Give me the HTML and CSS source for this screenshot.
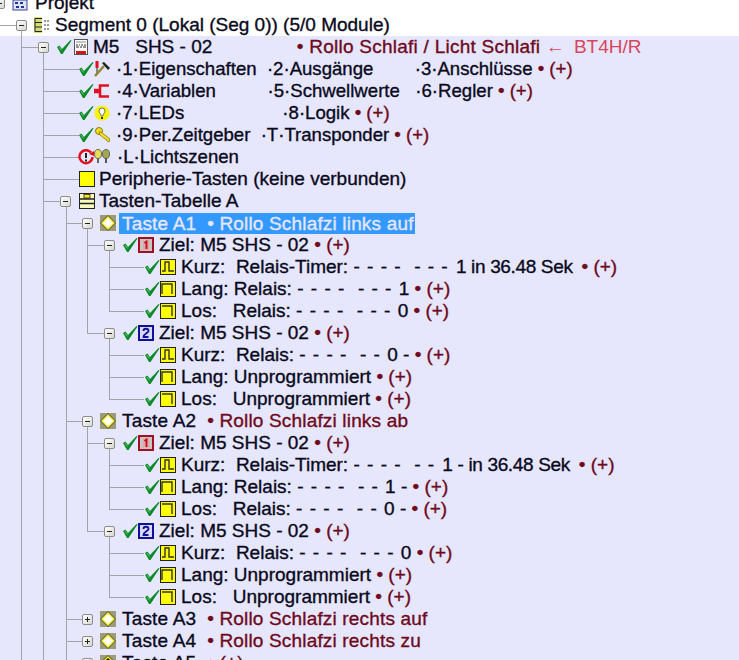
FILE: index.html
```html
<!DOCTYPE html>
<html lang="de">
<head>
    <meta charset="UTF-8">
    <title>Projekt</title>
    <link rel="stylesheet" href="styles.css">
</head>
<body>

<svg class="defs" width="0" height="0">
    <symbol id="i-check" viewBox="0 0 16 16"><path d="M1 8l2.500-1.500 2.500 3.500L14.500 1l1 .5L6.500 15H5z" fill="#0a8a2a"/><path d="M3 8l2.500 3.500" stroke="#6c6" fill="none"/></symbol>
    <symbol id="i-proj" viewBox="0 0 16 16"><rect x="1" y="5" width="14" height="10" fill="#dfe3f5" stroke="#334499"/><path d="M2 0h12v5H2z" fill="#b9a24a"/><path d="M3 8h3M8 8h3M4 12h3M9 12h3" stroke="#223399" stroke-width="2"/></symbol>
    <symbol id="i-seg" viewBox="0 0 16 16"><rect x="0" y="0" width="8" height="16" fill="#d4dc78"/><path d="M1 1.500h7M1 1.500v13h7M1 5.500h7M1 10h7" fill="none" stroke="#222"/><path d="M10 4h5M10 8h5M10 12h5" stroke="#333" stroke-dasharray="2 1"/></symbol>
    <symbol id="i-mod" viewBox="0 0 16 16"><rect x="1.500" y=".5" width="13" height="15" fill="#fff" stroke="#555"/><path d="M3 3h10" stroke="#888"/><path d="M3 6h2M6 6h1M8 6h2M11 6h2M3 8h3M7 8h2M10 8h3" stroke="#222"/><rect x="3" y="12" width="10" height="3" fill="#d01818"/></symbol>
    <symbol id="i-tool" viewBox="0 0 16 16"><path d="M3 0v7" stroke="#e01020" stroke-width="3"/><path d="M3 7v6" stroke="#222"/><path d="M1 15L10 5" stroke="#8c8a30" stroke-width="2.500"/><path d="M8 2l2-1 6 6-2 2z" fill="#222"/></symbol>
    <symbol id="i-var" viewBox="0 0 16 16"><path d="M15 2.500H6V7H0M0 9h6v4.500h9" fill="none" stroke="#e01020" stroke-width="2.500"/></symbol>
    <symbol id="i-led" viewBox="0 0 16 16"><circle cx="8" cy="8" r="7.500" fill="#f6f400"/><path d="M5 6a3 3 0 1 1 6 0c0 2-2 2-2 5H7c0-3-2-3-2-5z" fill="#fff" stroke="#555" stroke-width=".8"/><path d="M7 12h2v2H7z" fill="#333"/></symbol>
    <symbol id="i-key" viewBox="0 0 16 16"><circle cx="5" cy="4" r="3.500" fill="#f2e020" stroke="#8a7a10"/><path d="M5 5h2l9 7-1 3-2-1-1-2-1 0-5-4z" fill="#f2e020" stroke="#8a7a10" stroke-width=".8"/></symbol>
    <symbol id="i-scene" viewBox="0 0 32 16"><path d="M13 3.500A6.500 6.500 0 1 0 14.500 8" fill="none" stroke="#e01020" stroke-width="2.500"/><path d="M11 5l5-3v5z" fill="#e01020"/><path d="M8 4v5M8 10.500v2" stroke="#222" stroke-width="2"/><ellipse cx="20" cy="5" rx="3.500" ry="4.500" fill="#e8e050" stroke="#666"/><path d="M19 9h2v5h-2z" fill="#666"/><ellipse cx="28" cy="5" rx="3.500" ry="4.500" fill="#a0a850" stroke="#666"/><path d="M27 9h2v5h-2z" fill="#555"/></symbol>
    <symbol id="i-periph" viewBox="0 0 16 16"><rect x=".5" y=".5" width="15" height="15" fill="#ffff00" stroke="#222"/></symbol>
    <symbol id="i-table" viewBox="0 0 16 16"><rect x=".5" y=".5" width="15" height="15" fill="#f8f8c0" stroke="#222"/><path d="M1 6h14M1 10.500h14" stroke="#222" stroke-width="1.500"/><rect x="5" y="1.500" width="6" height="3.500" fill="#ffee00" stroke="#222" stroke-width=".8"/></symbol>
    <symbol id="i-taste" viewBox="0 0 16 16"><rect width="16" height="16" fill="#9c9c78"/><path d="M8 .5L15.500 8 8 15.500.5 8z" fill="#f8f020" stroke="#444"/><path d="M8 3L13 8 8 13 3 8z" fill="#fff"/></symbol>
    <symbol id="i-tasteoff" viewBox="0 0 16 16"><rect width="16" height="16" fill="#9c9c78"/><path d="M8 .5L15.500 8 8 15.500.5 8z" fill="#f8f020" stroke="#444"/><path d="M8 3L13 8 8 13 3 8z" fill="#111"/></symbol>
    <symbol id="i-z1" viewBox="0 0 16 16"><rect x="1" y="1" width="14" height="14" fill="#c8c4c4" stroke="#a01020" stroke-width="2"/><rect x="5" y="3.500" width="6" height="9" fill="#e8a0a0"/><path d="M6.500 6L8.500 4.500V12" fill="none" stroke="#c01020" stroke-width="1.800"/></symbol>
    <symbol id="i-z2" viewBox="0 0 16 16"><rect x="1" y="1" width="14" height="14" fill="#d8d8f0" stroke="#10109a" stroke-width="2"/><path d="M5.500 6c0-3 5-3 5 0 0 2-5 3-5 6h5" fill="none" stroke="#10109a" stroke-width="1.800"/></symbol>
    <symbol id="i-kurz" viewBox="0 0 16 16"><rect x=".5" y=".5" width="15" height="15" fill="#ffff00" stroke="#222"/><path d="M2 12h3V3h4v9h5" fill="none" stroke="#333" stroke-width="1.400"/></symbol>
    <symbol id="i-lang" viewBox="0 0 16 16"><rect x=".5" y=".5" width="15" height="15" fill="#ffff00" stroke="#222"/><path d="M2 13V3h10v10" fill="none" stroke="#333" stroke-width="1.400"/></symbol>
    <symbol id="i-los" viewBox="0 0 16 16"><rect x=".5" y=".5" width="15" height="15" fill="#ffff00" stroke="#222"/><path d="M2 3h10v10" fill="none" stroke="#333" stroke-width="1.400"/></symbol>
</svg>

<div class="tree">
    <svg class="guides" width="739" height="680">
        <path d="M21.500 30V680M0 25.500h16M43.500 52V680M22 47.500h16M66.500 206V680
                 M44 69.500h35M44 91.500h35M44 113.500h35M44 135.500h35M44 157.500h35M44 179.500h35M44 201.500h16
                 M66 223.500h16M66 421.500h16M66 619.500h16M66 641.500h16M66 663.500h16
                 M87.500 228V333.500M87 245.500h17M87 333.500h17M87.500 426V531.500M87 443.500h17M87 531.500h17
                 M109.500 250V311.500M109 267.500h35M109 289.500h35M109 311.500h35
                 M109.500 338V399.500M109 355.500h35M109 377.500h35M109 399.500h35
                 M109.500 448V509.500M109 465.500h35M109 487.500h35M109 509.500h35
                 M109.500 536V597.500M109 553.500h35M109 575.500h35M109 597.500h35" fill="none" stroke="#a4a4a8"/>
    </svg>

    <div class="row lv-proj"><span class="tgl minus"></span><svg class="ico"><use href="#i-proj"/></svg><span>Projekt</span></div>
    <div class="row lv-seg"><span class="tgl minus"></span><svg class="ico"><use href="#i-seg"/></svg><span>Segment 0 (Lokal (Seg 0)) (5/0 Module)</span></div>

    <div class="body">
        <div class="row lv-mod"><span class="tgl minus"></span><svg class="chk"><use href="#i-check"/></svg><svg class="ico"><use href="#i-mod"/></svg><span>M5   SHS - 02                <b class="mark">• Rollo Schlafi / Licht Schlafi</b> <b class="link"><i class="arrow">←</i> BT4H/R</b></span></div>
        <div class="row lv-item"><svg class="chk"><use href="#i-check"/></svg><svg class="ico"><use href="#i-tool"/></svg><span>·1·Eigenschaften  ·2·Ausgänge        ·3·Anschlüsse <b class="mark">• (+)</b></span></div>
        <div class="row lv-item"><svg class="chk"><use href="#i-check"/></svg><svg class="ico"><use href="#i-var"/></svg><span>·4·Variablen          ·5·Schwellwerte   ·6·Regler <b class="mark">• (+)</b></span></div>
        <div class="row lv-item"><svg class="chk"><use href="#i-check"/></svg><svg class="ico"><use href="#i-led"/></svg><span>·7·LEDs                   ·8·Logik <b class="mark">• (+)</b></span></div>
        <div class="row lv-item"><svg class="chk"><use href="#i-check"/></svg><svg class="ico"><use href="#i-key"/></svg><span>·9·Per.Zeitgeber  ·T·Transponder <b class="mark">• (+)</b></span></div>
        <div class="row lv-scene"><svg class="ico-wide"><use href="#i-scene"/></svg><span>·L·Lichtszenen</span></div>
        <div class="row lv-per"><svg class="ico"><use href="#i-periph"/></svg><span>Peripherie-Tasten (keine verbunden)</span></div>
        <div class="row lv-tab"><span class="tgl minus"></span><svg class="ico"><use href="#i-table"/></svg><span>Tasten-Tabelle A</span></div>

        <div class="row lv-taste"><span class="tgl minus"></span><svg class="ico"><use href="#i-taste"/></svg><span class="selected">Taste A1  • Rollo Schlafzi links auf</span></div>
        <div class="row lv-ziel"><span class="tgl minus"></span><svg class="chk"><use href="#i-check"/></svg><svg class="ico"><use href="#i-z1"/></svg><span>Ziel: M5 SHS - 02 <b class="mark">• (+)</b></span></div>
        <div class="row lv-key"><svg class="chk"><use href="#i-check"/></svg><svg class="ico"><use href="#i-kurz"/></svg><span>Kurz:  Relais-Timer: <span class="dashes">- - - -  - - - </span><span class="tight">1 in 36.48 Sek </span><b class="mark">• (+)</b></span></div>
        <div class="row lv-key"><svg class="chk"><use href="#i-check"/></svg><svg class="ico"><use href="#i-lang"/></svg><span>Lang: Relais: <span class="dashes">- - - -  - - - </span>1 <b class="mark">• (+)</b></span></div>
        <div class="row lv-key"><svg class="chk"><use href="#i-check"/></svg><svg class="ico"><use href="#i-los"/></svg><span>Los:   Relais: <span class="dashes">- - - -  - - - </span>0 <b class="mark">• (+)</b></span></div>
        <div class="row lv-ziel"><span class="tgl minus"></span><svg class="chk"><use href="#i-check"/></svg><svg class="ico"><use href="#i-z2"/></svg><span>Ziel: M5 SHS - 02 <b class="mark">• (+)</b></span></div>
        <div class="row lv-key"><svg class="chk"><use href="#i-check"/></svg><svg class="ico"><use href="#i-kurz"/></svg><span>Kurz:  Relais: <span class="dashes">- - - -  - - </span>0 - <b class="mark">• (+)</b></span></div>
        <div class="row lv-key"><svg class="chk"><use href="#i-check"/></svg><svg class="ico"><use href="#i-lang"/></svg><span>Lang: Unprogrammiert <b class="mark">• (+)</b></span></div>
        <div class="row lv-key"><svg class="chk"><use href="#i-check"/></svg><svg class="ico"><use href="#i-los"/></svg><span>Los:   Unprogrammiert <b class="mark">• (+)</b></span></div>

        <div class="row lv-taste"><span class="tgl minus"></span><svg class="ico"><use href="#i-taste"/></svg><span>Taste A2  <b class="mark">• Rollo Schlafzi links ab</b></span></div>
        <div class="row lv-ziel"><span class="tgl minus"></span><svg class="chk"><use href="#i-check"/></svg><svg class="ico"><use href="#i-z1"/></svg><span>Ziel: M5 SHS - 02 <b class="mark">• (+)</b></span></div>
        <div class="row lv-key"><svg class="chk"><use href="#i-check"/></svg><svg class="ico"><use href="#i-kurz"/></svg><span>Kurz:  Relais-Timer: <span class="dashes">- - - -  - - </span><span class="tight">1 - in 36.48 Sek </span><b class="mark">• (+)</b></span></div>
        <div class="row lv-key"><svg class="chk"><use href="#i-check"/></svg><svg class="ico"><use href="#i-lang"/></svg><span>Lang: Relais: <span class="dashes">- - - -  - - </span>1 - <b class="mark">• (+)</b></span></div>
        <div class="row lv-key"><svg class="chk"><use href="#i-check"/></svg><svg class="ico"><use href="#i-los"/></svg><span>Los:   Relais: <span class="dashes">- - - -  - - </span>0 - <b class="mark">• (+)</b></span></div>
        <div class="row lv-ziel"><span class="tgl minus"></span><svg class="chk"><use href="#i-check"/></svg><svg class="ico"><use href="#i-z2"/></svg><span>Ziel: M5 SHS - 02 <b class="mark">• (+)</b></span></div>
        <div class="row lv-key"><svg class="chk"><use href="#i-check"/></svg><svg class="ico"><use href="#i-kurz"/></svg><span>Kurz:  Relais: <span class="dashes">- - - -  - - - </span>0 <b class="mark">• (+)</b></span></div>
        <div class="row lv-key"><svg class="chk"><use href="#i-check"/></svg><svg class="ico"><use href="#i-lang"/></svg><span>Lang: Unprogrammiert <b class="mark">• (+)</b></span></div>
        <div class="row lv-key"><svg class="chk"><use href="#i-check"/></svg><svg class="ico"><use href="#i-los"/></svg><span>Los:   Unprogrammiert <b class="mark">• (+)</b></span></div>

        <div class="row lv-taste"><span class="tgl plus"></span><svg class="ico"><use href="#i-taste"/></svg><span>Taste A3  <b class="mark">• Rollo Schlafzi rechts auf</b></span></div>
        <div class="row lv-taste"><span class="tgl plus"></span><svg class="ico"><use href="#i-taste"/></svg><span>Taste A4  <b class="mark">• Rollo Schlafzi rechts zu</b></span></div>
        <div class="row lv-taste"><span class="tgl plus"></span><svg class="ico"><use href="#i-tasteoff"/></svg><span>Taste A5  <b class="mark">• (+)</b></span></div>
    </div>
</div>

</body>
</html>
```

FILE: styles.css
```css
html, body {
    margin: 0;
    padding: 0;
    height: 660px;
    overflow: hidden;
    background-color: #ffffff;
}

.defs {
    display: block;
    height: 0;
}

.tree {
    position: relative;
    margin-top: -8px;
    font-family: "Liberation Sans", Arial, sans-serif;
    font-size: 19px;
    color: #0a0a1c;
    -webkit-text-stroke: 0.35px #0a0a1c;
}

.guides {
    position: absolute;
    left: 0;
    top: 8px;
    z-index: 1;
}

/* the block below the segment line has the lilac background */
.body {
    background-color: #e6e6fc;
}

.row {
    position: relative;
    display: flex;
    align-items: center;
    height: 22px;
    white-space: pre;
}

.row > * {
    position: relative;
    z-index: 2;
    flex: none;
}

b {
    font-weight: normal;
}

.mark {
    color: #6e0a1c;
    -webkit-text-stroke: 0.35px #6e0a1c;
}

.lv-mod .mark {
    letter-spacing: 0.25px;
}

.link {
    color: #d8465c;
    -webkit-text-stroke: 0;
}

.arrow {
    font-style: normal;
    margin-right: 4px;
}

.dashes {
    letter-spacing: 1px;
}

.tight {
    letter-spacing: -0.35px;
    margin-left: 1px;
    margin-right: 4px;
}

.selected {
    background-color: #3399ff;
    color: #e6e6fc;
    -webkit-text-stroke: 0.35px #e6e6fc;
    margin-left: -3px;
    padding: 0 1px 0 3px;
    height: 21px;
    line-height: 21px;
}

/* plus/minus box */
.tgl {
    width: 9px;
    height: 9px;
    border: 1px solid #8c8c8c;
    border-radius: 2px;
    background: linear-gradient(135deg, #ffffff, #d8d8d0);
}

.tgl::before {
    content: "";
    position: absolute;
    left: 2px;
    top: 4px;
    width: 5px;
    height: 1px;
    background-color: #222222;
}

.plus::after {
    content: "";
    position: absolute;
    left: 4px;
    top: 2px;
    width: 1px;
    height: 5px;
    background-color: #222222;
}

.chk, .ico {
    width: 16px;
    height: 16px;
}

.ico-wide {
    width: 32px;
    height: 16px;
}

/* tree levels */
.lv-proj { margin-left: -6px; }
.lv-proj .tgl { margin-right: 7px; }
.lv-proj .ico { margin-right: 7px; }

.lv-seg { padding-left: 16px; }
.lv-seg .tgl { margin-right: 7px; }
.lv-seg .ico { margin-right: 5px; }

.lv-mod { padding-left: 38px; }
.lv-mod .tgl { margin-right: 7px; }
.lv-mod .chk { margin-right: 1px; }
.lv-mod .ico { margin-right: 4px; }

.lv-item { padding-left: 78px; font-size: 18.6px; }
.lv-item .ico { margin-right: 6px; }

.lv-scene { padding-left: 78px; font-size: 18.6px; }
.lv-scene .ico-wide { margin-right: 7px; }

.lv-per { padding-left: 79px; }
.lv-per .ico { margin-right: 4px; }

.lv-tab { padding-left: 60px; }
.lv-tab .tgl { margin-right: 8px; }
.lv-tab .ico { margin-right: 4px; }

.lv-taste { padding-left: 82px; letter-spacing: 0.17px; }
.lv-taste .tgl { margin-right: 7px; }
.lv-taste .ico { margin-right: 6px; }

.lv-ziel { padding-left: 104px; }
.lv-ziel .tgl { margin-right: 7px; }
.lv-ziel .ico { margin-right: 5px; }

.lv-key { padding-left: 144px; }
.lv-key .ico { margin-right: 5px; }
```
